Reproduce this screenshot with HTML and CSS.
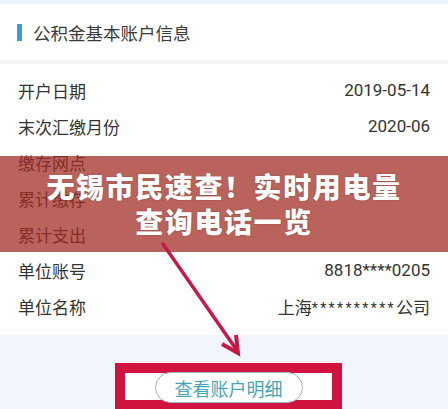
FILE: index.html
```html
<!DOCTYPE html>
<html lang="zh-CN">
<head>
  <meta charset="UTF-8" />
  <title>公积金基本账户信息</title>
  <link rel="stylesheet" href="styles.css">
</head>
<body>
  <div class="top-strip"></div>

  <div class="card-header">
    <span class="bar"></span>
    <span class="card-title">公积金基本账户信息</span>
  </div>
  <div class="divider"></div>

  <div class="rows">
    <div class="row"><span class="label">开户日期</span><span class="value">2019-05-14</span></div>
    <div class="row"><span class="label">末次汇缴月份</span><span class="value">2020-06</span></div>
    <div class="row"><span class="label">缴存网点</span><span class="value"></span></div>
    <div class="row"><span class="label">累计缴存</span><span class="value"></span></div>
    <div class="row"><span class="label">累计支出</span><span class="value"></span></div>
    <div class="row"><span class="label">单位账号</span><span class="value">8818****0205</span></div>
    <div class="row"><span class="label">单位名称</span><span class="value">上海<span class="stars">**********</span>公司</span></div>
  </div>

  <div class="footer">
    <div class="highlight-box">
      <button class="detail-btn">查看账户明细</button>
    </div>
  </div>

  <!-- overlay: headline band + arrow -->
  <div class="headline">
    <div>无锡市民速查！实时用电量</div>
    <div>查询电话一览</div>
  </div>

  <svg class="arrow" width="448" height="409" viewBox="0 0 448 409">
    <line x1="163" y1="244" x2="236" y2="349" stroke="#c61946" stroke-width="3.5" stroke-linecap="round"/>
    <path d="M222 344 L238 353 L236 335" fill="none" stroke="#c61946" stroke-width="4" stroke-linejoin="miter"/>
  </svg>
</body>
</html>
```

FILE: styles.css
```css
body {
  margin: 0;
  width: 448px;
  height: 409px;
  overflow: hidden;
  position: relative;
  background: #ffffff;
  font-family: "Noto Sans CJK SC", "Noto Sans", sans-serif;
  color: #333333;
}

.top-strip {
  height: 4px;
  background: #eef4fb;
}

.card-header {
  height: 56px;
  display: flex;
  align-items: center;
  padding-left: 17px;
}

.bar {
  width: 5px;
  height: 17px;
  background: #3a9ad9;
}

.card-title {
  margin-left: 11px;
  font-size: 17.5px;
  color: #3a3a3a;
}

.divider {
  height: 4px;
  background: #f3f4f6;
}

.rows {
  padding: 8px 18px 11px 18px;
}

.row {
  height: 36px;
  display: flex;
  justify-content: space-between;
  align-items: center;
  font-size: 17px;
}

.label {
  color: #333333;
}

.value {
  font-family: Roboto, "Noto Sans CJK SC", sans-serif;
  color: #333333;
}

.stars {
  font-size: 14px;
  letter-spacing: 2.4px;
  vertical-align: 1px;
}

.footer {
  background: #f2f6fc;
  height: 46px;
  padding-top: 28px;
  overflow: hidden;
}

.highlight-box {
  margin-left: 115px;
  width: 207px;
  height: 27px;
  border: 10px solid #d1143f;
  background: #ffffff;
  display: flex;
  justify-content: center;
  align-items: flex-start;
}

.detail-btn {
  margin-top: -1px;
  width: 148px;
  height: 31px;
  border: 1.5px solid #9cb3bb;
  border-radius: 16px;
  background: #ffffff;
  color: #46a5b6;
  font-family: "Noto Sans CJK SC", sans-serif;
  font-size: 18px;
  padding: 0;
}

.headline {
  position: absolute;
  left: 0;
  top: 156px;
  width: 448px;
  height: 96px;
  background: rgba(160, 45, 35, 0.74);
  display: flex;
  flex-direction: column;
  justify-content: center;
  align-items: center;
  color: #ffffff;
  font-size: 28px;
  font-weight: 900;
  letter-spacing: 1.6px;
  line-height: 35px;
  text-shadow: 0 0 2px rgba(0, 0, 0, 0.25);
}

.arrow {
  position: absolute;
  left: 0;
  top: 0;
  pointer-events: none;
}
```
